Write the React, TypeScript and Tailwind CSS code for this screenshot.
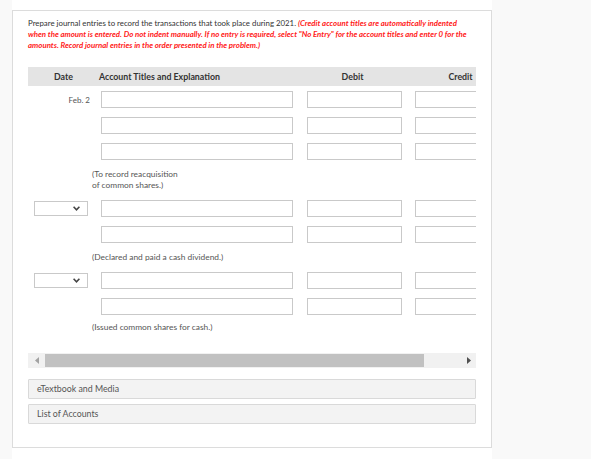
import React from "react";

const Input = ({ w }: { w: string }) => (
  <div className={`${w} h-[17px] shrink-0 border border-[#c9c9c9] bg-white`} />
);

const Dropdown = () => (
  <div className="ml-[6px] flex h-[15px] w-[54px] items-center justify-end border border-[#c9c9c9] bg-white pr-[7px]">
    <svg width="7" height="5" viewBox="0 0 7 5">
      <path d="M0.6 0.8 L3.5 3.8 L6.4 0.8" fill="none" stroke="#444" strokeWidth="1.6" />
    </svg>
  </div>
);

const Row = ({ date }: { date?: React.ReactNode }) => (
  <div className="flex h-[17px] items-center">
    <div className="flex w-[73px] shrink-0 items-center">{date}</div>
    <Input w="w-[192px]" />
    <div className="w-[14px] shrink-0" />
    <Input w="w-[95px]" />
    <div className="w-[13px] shrink-0" />
    <Input w="w-[95px]" />
  </div>
);

const Note = ({ children }: { children: React.ReactNode }) => (
  <div className="whitespace-nowrap pl-[64px] text-[8.4px] leading-[11px] text-[#555]">{children}</div>
);

export default function App() {
  return (
    <div
      className="flex h-[459px] w-[591px] bg-[#f9f9f9]"
      style={{ fontFamily: "Lato, 'Open Sans', sans-serif" }}
    >
      <div className="ml-[12px] flex w-[480px] flex-col bg-white pt-[10px]">
        <div className="flex h-[438px] flex-col border border-[#dcdcdc] px-[15px] pt-[7px]">
          <div className="whitespace-nowrap text-[7.85px] leading-[11px] text-[#333]">
            Prepare journal entries to record the transactions that took place during 2021.{" "}
            <span className="font-bold italic text-[#ff1a1a]">
              (Credit account titles are automatically indented
            </span>
            <br />
            <span className="font-bold italic text-[#ff1a1a]">
              when the amount is entered. Do not indent manually. If no entry is required, select "No Entry" for the account titles and enter 0 for the
            </span>
            <br />
            <span className="font-bold italic text-[#ff1a1a]">
              amounts. Record journal entries in the order presented in the problem.)
            </span>
          </div>

          <div className="mt-[16px] w-[448px] overflow-hidden">
            <div className="w-[500px]">
              <div className="flex h-[19px] items-center whitespace-nowrap bg-[#e4e4e4] text-[8.8px] font-bold text-[#333]">
                <div className="w-[71px] shrink-0 text-center">Date</div>
                <div className="w-[206px] shrink-0">Account Titles and Explanation</div>
                <div className="w-[95px] shrink-0 text-center">Debit</div>
                <div className="w-[13px] shrink-0" />
                <div className="w-[95px] shrink-0 text-center">Credit</div>
              </div>

              <div className="mt-[5px] flex flex-col gap-[9px]">
                <Row
                  date={
                    <div className="w-full pr-[11px] text-right text-[8px] text-[#555]">Feb. 2</div>
                  }
                />
                <Row />
                <Row />
                <Note>
                  (To record reacquisition
                  <br />
                  of common shares.)
                </Note>
                <Row date={<Dropdown />} />
                <Row />
                <Note>(Declared and paid a cash dividend.)</Note>
                <Row date={<Dropdown />} />
                <Row />
                <div className="-mt-[2px]">
                  <Note>(Issued common shares for cash.)</Note>
                </div>
              </div>
            </div>
          </div>

          <div className="mt-[20px] flex h-[15px] w-[448px] items-center bg-[#f1f1f1]">
            <div className="flex w-[17px] shrink-0 justify-center">
              <svg width="4" height="7" viewBox="0 0 4 7">
                <path d="M4 0 L0 3.5 L4 7 Z" fill="#a3a3a3" />
              </svg>
            </div>
            <div className="h-[13px] w-[379px] bg-[#c1c1c1]" />
            <div className="flex flex-1 justify-end pr-[5px]">
              <svg width="4" height="7" viewBox="0 0 4 7">
                <path d="M0 0 L4 3.5 L0 7 Z" fill="#505050" />
              </svg>
            </div>
          </div>

          <div className="mt-[11px] flex h-[20px] w-[448px] items-center rounded-[1px] border border-[#d9d9d9] bg-[#f3f3f3] pl-[8px] text-[8.8px] text-[#555]">
            eTextbook and Media
          </div>
          <div className="mt-[5px] flex h-[20px] w-[448px] items-center rounded-[1px] border border-[#d9d9d9] bg-[#f3f3f3] pl-[8px] text-[8.8px] text-[#555]">
            List of Accounts
          </div>
        </div>
      </div>
    </div>
  );
}
